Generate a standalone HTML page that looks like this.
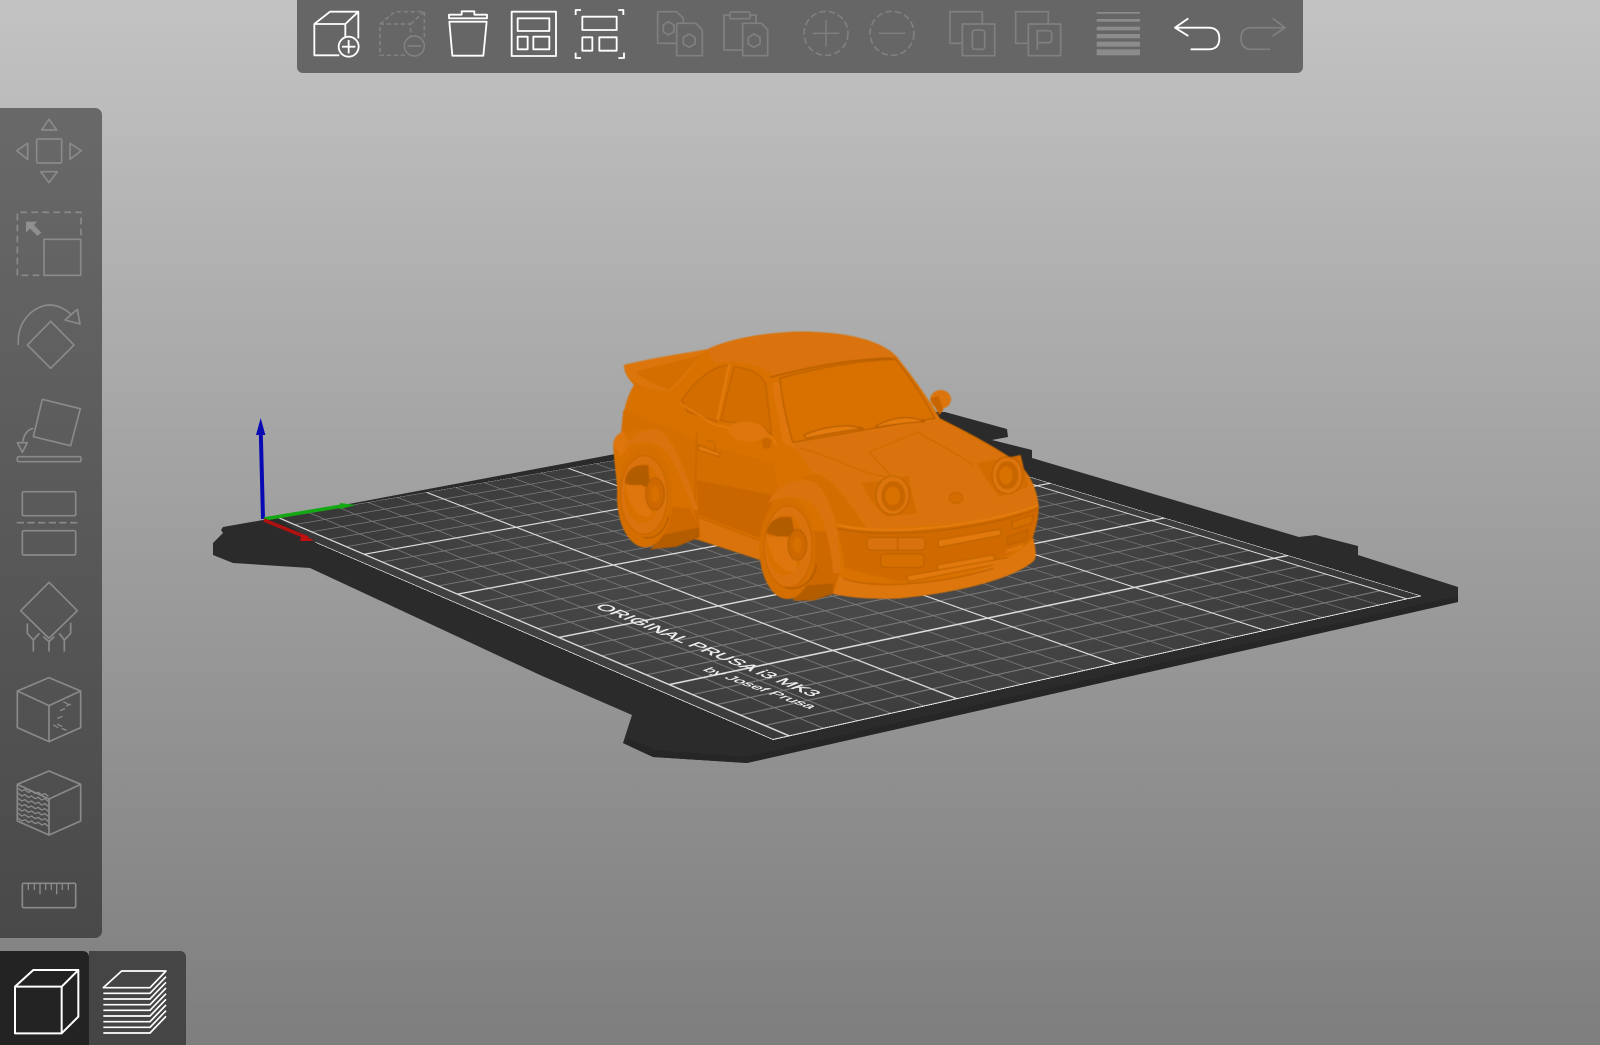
<!DOCTYPE html>
<html><head><meta charset="utf-8"><title>PrusaSlicer</title>
<style>
html,body{margin:0;padding:0;width:1600px;height:1045px;overflow:hidden;background:#999}
svg.l{display:block;position:absolute;left:0;top:0}
#g{position:absolute;left:0;top:0;width:1000px;height:1000px;transform-origin:0 0;
transform:matrix3d(.6678,-.0568,0,.00010025, .3626,.0789,0,-.00019067, 0,0,1,0, 263,520,0,1)}
#g svg{display:block;width:1000px;height:1000px}
text{font-family:"Liberation Sans",sans-serif;fill:#efefef}
</style></head><body>
<svg class="l" width="1600" height="1045" viewBox="0 0 1600 1045" xmlns="http://www.w3.org/2000/svg">
<defs>
<linearGradient id="bg" x1="0" y1="0" x2="0" y2="1"><stop offset="0" stop-color="#c3c3c3"/><stop offset=".4" stop-color="#a6a6a6"/><stop offset="1" stop-color="#7e7e7e"/></linearGradient>
</defs>
<rect width="1600" height="1045" fill="url(#bg)"/>
<polygon fill="#2b2b2b" points="263,520 223,527 221,530 223,533 213,543 213,555 233,563 310,568 540,675 632,715 623,743 653,757 747,763 1458,602 1458,587 1358,555 1358,546 1323,537 1316,535 1299,537 1032,458 1032,450 1004,443 992,440 1008,437 1007,429 945,412 850,410"/>
<polygon fill="#262626" points="623,743 653,757 747,763 1458,602 1458,596 745,757 655,750 628,738"/>
</svg>

<div id="g"><svg viewBox="0 0 1000 1000" xmlns="http://www.w3.org/2000/svg">
<defs><radialGradient id="bed" cx=".45" cy=".55" r=".7"><stop offset="0" stop-color="#4c4c4c"/><stop offset=".6" stop-color="#424242"/><stop offset="1" stop-color="#363636"/></radialGradient></defs>
<polygon points="23.4,0 1000,0 1000,1000 0,1000 0,123" fill="url(#bed)"/>
<path stroke="#7c7c7c" stroke-width="2.2" fill="none" d="M71,0V1000M118.6,0V1000M166.2,0V1000M213.8,0V1000M309,0V1000M356.6,0V1000M404.2,0V1000M451.8,0V1000M547,0V1000M594.6,0V1000M642.2,0V1000M689.8,0V1000M785,0V1000M832.6,0V1000M880.2,0V1000M927.8,0V1000"/>
<path stroke="#7c7c7c" stroke-width="2.8" fill="none" d="M23,40H975M23,80H975M23,120H975M23,160H975M23,240H975M23,280H975M23,320H975M23,360H975M23,440H975M23,480H975M23,520H975M23,560H975M23,640H975M23,680H975M23,720H975M23,760H975M23,840H975M23,880H975M23,920H975M23,960H975"/>
<path stroke="#dcdcdc" stroke-width="4.4" fill="none" d="M23,200H1000M23,400H1000M23,600H1000M23,800H1000"/>
<path stroke="#dedede" stroke-width="3.4" fill="none" d="M23.4,0V1000M261.4,0V1000M499.4,0V1000M737.4,0V1000M975.4,0V1000"/>
<path stroke="#f0f0f0" stroke-width="3.6" fill="none" d="M0,123V1000M1000,300V1000"/>
<path stroke="#f0f0f0" stroke-width="5" fill="none" d="M0,1000H1000"/>
<path stroke="#a8a8a8" stroke-width="3" fill="none" d="M23,0H1000"/>
</svg></div>

<svg class="l" width="1600" height="1045" viewBox="0 0 1600 1045" xmlns="http://www.w3.org/2000/svg">
<defs>
<linearGradient id="lp" x1="0" y1="0" x2="0" y2="1"><stop offset="0" stop-color="#696969"/><stop offset="1" stop-color="#494949"/></linearGradient>
<filter id="b2" x="-5%" y="-5%" width="110%" height="110%"><feGaussianBlur stdDeviation="1.8"/></filter>
</defs>
<text transform="matrix(.924 .381 -.95 .35 594 607)" font-size="16" textLength="236" lengthAdjust="spacingAndGlyphs" stroke="#efefef" stroke-width=".35">ORIGINAL PRUSA i3 MK3</text>
<text transform="matrix(.94 .34 -.95 .35 702 670)" font-size="12.5" textLength="115" lengthAdjust="spacingAndGlyphs" stroke="#efefef" stroke-width=".25">by Josef Prusa</text>

<line x1="263" y1="519" x2="260.8" y2="433" stroke="#0a0ab4" stroke-width="4"/>
<polygon points="260.7,418 256,435 265.4,435" fill="#0a0ab4"/>
<line x1="264" y1="519" x2="345" y2="505.5" stroke="#14a814" stroke-width="3.5"/>
<polygon points="340,503 356,505 340,509" fill="#14a814"/>
<line x1="264" y1="520" x2="308" y2="538" stroke="#b01010" stroke-width="3.5"/>
<polygon points="302,534 314,541 300,541" fill="#c01010"/>

<!-- car -->
<g transform="translate(600 320) scale(.33333)"><g filter="url(#b2)">
 <ellipse cx="1022" cy="238" rx="31" ry="28" fill="#dc7407"/>
 <path d="M990,235 L1015,228 L1030,270 L1018,285Z" fill="#c86504"/>
 <path d="M72,135 C150,115 250,100 322,88 C380,60 480,38 600,35 C720,35 840,55 892,112 C930,160 975,220 1020,295 C1080,325 1170,370 1250,425 C1290,460 1312,510 1316,560 C1316,600 1305,630 1298,655 C1308,690 1310,710 1302,722 C1250,770 1100,815 900,835 C830,838 760,835 700,822 L640,800 L480,720 L295,660 L200,640 L60,590 C55,500 40,420 40,375 C42,350 55,340 72,335 C62,290 80,230 102,195 C85,175 72,160 72,135 Z" fill="#d87106"/>
 <path d="M70,270 C150,300 230,330 300,370 L520,430 L540,530 L480,660 L295,590 L250,430 L150,360 L60,370Z" fill="#d46e06"/>
 <path d="M290,480 L520,525 L500,660 L470,650 L295,585Z" fill="#c96605"/>
 <path d="M280,585 L480,660 L480,720 L295,655Z" fill="#db7307"/>
 <path d="M283,587 L478,662" stroke="#c26204" stroke-width="3" fill="none"/>
 <path d="M40,375 C60,335 130,310 190,330 C240,370 270,490 295,620 L280,655 L200,660 L60,600Z" fill="#d66f06"/>
 <path d="M40,375 C42,350 55,340 72,335 L92,375 L62,410Z" fill="#de7507"/>
 <path d="M322,88 C380,60 480,38 600,35 C720,35 840,55 892,112 C780,115 640,140 520,170 C480,130 400,120 340,130Z" fill="#da7207"/>
 <path d="M510,172 C640,137 780,114 892,114" stroke="#b35b04" stroke-width="4" fill="none"/>
 <path d="M72,135 C150,115 250,100 322,88 C290,120 250,190 205,215 C170,210 130,205 122,198 C95,185 72,160 72,135Z" fill="#dd7507"/>
 <path d="M108,155 C170,138 260,118 305,105 C275,130 240,185 205,208 C165,195 130,180 108,155Z" fill="#d46e06"/>
 <path d="M245,240 C280,190 330,140 385,135 L350,305 L262,275Z" fill="#d36d05" stroke="#b85d04" stroke-width="3"/>
 <path d="M402,140 C445,145 482,160 497,192 L515,345 L490,320 L362,302Z" fill="#d36d05" stroke="#b85d04" stroke-width="3"/>
 <path d="M388,132 L352,300" stroke="#e47b0c" stroke-width="7"/>
 <path d="M240,250 L345,315 L515,350 L530,375" stroke="#e47b0c" stroke-width="5" fill="none"/>
 <path d="M515,190 L550,372 L600,390 L1020,300 L892,112Z" fill="#df7608"/>
 <path d="M540,175 C640,145 780,120 888,118 C930,170 975,240 1005,295 C900,310 740,340 578,367 C560,300 545,240 540,175Z" fill="#d87106" stroke="#b35b04" stroke-width="3.5"/>
 <path d="M612,345 C670,320 740,310 790,325 C720,335 660,345 618,355Z" fill="#e47b0c" stroke="#a85503" stroke-width="3"/>
 <path d="M828,318 C880,290 930,285 975,305 C920,308 870,315 832,322Z" fill="#e47b0c" stroke="#a85503" stroke-width="3"/>
 <path d="M578,372 C720,345 880,325 1020,298 C1100,345 1180,385 1250,425 C1290,460 1312,510 1316,560 C1200,600 1000,625 800,625 C700,600 650,470 578,372Z" fill="#da7307"/>
 <path d="M600,385 C680,400 800,470 860,470" stroke="#c86605" stroke-width="2.5" fill="none"/>
 <path d="M805,395 C830,420 850,440 870,465" stroke="#c56404" stroke-width="2.5" fill="none"/>
 <path d="M950,335 C1010,370 1070,400 1120,435" stroke="#c56404" stroke-width="2.5" fill="none"/>
 <path d="M810,395 L955,335" stroke="#cb6705" stroke-width="2.5" fill="none"/>
 <path d="M650,460 C720,490 780,600 800,625 L710,610 C700,570 650,500 600,470Z" fill="#d46d06"/>
 <path d="M295,375 L360,400 L358,410 L295,390Z" fill="#e37a0a" stroke="#b35b04" stroke-width="2.5"/>
 <path d="M320,365 C340,355 350,375 345,395" fill="none" stroke="#b85d04" stroke-width="2.5"/>
 <path d="M290,340 L285,570" stroke="#c26204" stroke-width="3"/>
 <path d="M480,345 L515,360 L510,385 L490,385Z" fill="#c86605"/>
 <ellipse cx="443" cy="335" rx="58" ry="30" fill="#df7608" transform="rotate(6 443 335)"/>
 <path d="M712,615 C850,650 1150,620 1316,555 C1316,600 1305,630 1298,655 C1240,710 1100,760 900,785 L735,745Z" fill="#d06b05"/>
 <path d="M712,615 C850,650 1150,620 1316,555" stroke="#e67d0c" stroke-width="6" fill="none"/>
 <path d="M712,625 C850,660 1150,630 1310,568" stroke="#b35b04" stroke-width="3" fill="none"/>
 <rect x="800" y="652" width="175" height="38" rx="10" fill="#d97107" stroke="#b35b04" stroke-width="2.5"/>
 <line x1="893" y1="652" x2="893" y2="690" stroke="#b35b04" stroke-width="2.5"/>
 <rect x="842" y="702" width="130" height="40" rx="10" fill="#d56f06" stroke="#b35b04" stroke-width="2.5"/>
 <path d="M1015,660 L1200,628 L1205,645 L1015,682Z" fill="#e27908" stroke="#b35b04" stroke-width="2.5"/>
 <path d="M1010,735 L1180,705 L1185,720 L1015,750Z" fill="#e27908" stroke="#b35b04" stroke-width="2.5"/>
 <path d="M920,768 L1240,710 L1240,722 L925,785Z" fill="#e27908" stroke="#b35b04" stroke-width="2.5"/>
 <path d="M1235,605 L1300,585 L1295,610 L1238,628Z" fill="#d56f06" stroke="#b35b04" stroke-width="2.5"/>
 <path d="M1222,650 L1285,630 L1280,660 L1222,675Z" fill="#cb6705" stroke="#b35b04" stroke-width="2"/>
 <path d="M1218,690 L1270,672 L1265,685 L1218,700Z" fill="#df7608"/>
 <path d="M695,735 C715,790 800,800 900,795 C1060,785 1220,740 1300,655 C1308,690 1310,710 1302,722 C1250,770 1100,815 900,835 C830,838 760,835 700,822 C690,790 685,760 695,735Z" fill="#dd7608"/>
 <path d="M730,775 C800,805 1000,800 1180,745" stroke="#bb5f04" stroke-width="3.5" fill="none"/>
 <path d="M785,490 L925,468 L950,580 L860,590 C820,560 800,520 785,490Z" fill="#d26c05"/>
 <ellipse cx="878" cy="526" rx="50" ry="58" fill="#dc7407" stroke="#b05903" stroke-width="2.5"/>
 <ellipse cx="880" cy="528" rx="36" ry="44" fill="#c76504"/>
 <ellipse cx="878" cy="528" rx="22" ry="28" fill="#d87106"/>
 <path d="M1130,430 L1262,405 L1285,500 L1200,530 C1170,500 1150,460 1130,430Z" fill="#d26c05"/>
 <ellipse cx="1222" cy="466" rx="46" ry="56" fill="#dc7407" stroke="#b05903" stroke-width="2.5"/>
 <ellipse cx="1222" cy="466" rx="33" ry="42" fill="#c76504"/>
 <ellipse cx="1218" cy="466" rx="20" ry="27" fill="#d87106"/>
 <ellipse cx="1068" cy="534" rx="20" ry="16" fill="#d46d06" stroke="#b35b04" stroke-width="2"/>
 <path d="M215,555 L295,565 L300,650 L230,680 L150,688 C190,660 215,610 215,555Z" fill="#cd6805"/>
 <path d="M190,645 L297,622 L298,652 L230,680 L150,688Z" fill="#b35b04"/>
 <path d="M60,440 C80,370 130,360 190,380 C215,420 250,500 300,620 L270,565 L215,560 C205,470 170,400 130,385Z" fill="#d87006"/>
 <ellipse cx="135" cy="530" rx="84" ry="152" fill="#d56e06"/>
 <ellipse cx="132" cy="525" rx="70" ry="118" fill="#da7307" stroke="#bb5f04" stroke-width="2"/>
 <ellipse cx="128" cy="520" rx="55" ry="88" fill="#d87006"/>
 <path d="M75,490 C76,450 105,430 145,436 L150,500 L110,500Z" fill="#b25b03"/>
 <path d="M76,495 L125,495 L150,510 L155,590 C115,600 85,560 76,495Z" fill="#de7608"/>
 <ellipse cx="165" cy="522" rx="28" ry="48" fill="#cd6905" stroke="#ae5903" stroke-width="2.5"/>
 <ellipse cx="165" cy="522" rx="13" ry="24" fill="#d87006"/>
 <path d="M130,652 C165,660 195,635 205,590" stroke="#a25202" stroke-width="3" fill="none"/>
 <path d="M70,390 C90,340 140,320 180,330 C230,370 270,490 295,570 L280,570 C250,500 225,420 185,382 C140,360 100,365 70,390Z" fill="#da7207"/>
 <path d="M620,630 L705,640 L722,750 L700,820 L640,840 L580,842 C620,790 630,700 620,630Z" fill="#cd6805"/>
 <path d="M575,800 L700,790 L698,822 L640,842 L580,842Z" fill="#b35b04"/>
 <ellipse cx="562" cy="685" rx="84" ry="152" fill="#d56e06"/>
 <ellipse cx="565" cy="680" rx="72" ry="122" fill="#da7307" stroke="#bb5f04" stroke-width="2"/>
 <ellipse cx="555" cy="675" rx="56" ry="90" fill="#d87006"/>
 <path d="M500,640 C504,605 530,585 575,592 L585,650 L535,650Z" fill="#b25b03"/>
 <path d="M500,650 L560,650 L590,670 L590,755 C540,760 510,715 500,650Z" fill="#de7608"/>
 <ellipse cx="592" cy="675" rx="28" ry="46" fill="#cd6905" stroke="#ae5903" stroke-width="2.5"/>
 <ellipse cx="592" cy="675" rx="13" ry="24" fill="#d87006"/>
 <path d="M555,802 C600,815 640,785 650,735" stroke="#a25202" stroke-width="3" fill="none"/>
 <path d="M505,550 C530,480 610,470 650,490 C700,540 720,640 722,760 L700,760 C690,660 670,590 640,555 C600,525 545,525 505,550Z" fill="#da7207"/>
</g></g>

<!-- top toolbar -->
<path d="M297,0 H1303 V67 a6,6 0 0 1 -6,6 H303 a6,6 0 0 1 -6,-6Z" fill="#666"/>
<g transform="translate(290 0) scale(.33333)" fill="none" stroke-linejoin="round">
 <g stroke="#fff" stroke-width="5.5">
  <path d="M148,166 H73 V72 H166 V112 M73,72 L120,35 H205 V115 M166,72 L205,35"/>
  <circle cx="176" cy="140" r="30"/><path d="M176,120 V160 M156,140 H196"/>
  <path d="M478,65 H590 L580,167 H487Z"/><path d="M477,44 H515 V34 H553 V44 H591 V55 H477Z"/>
  <rect x="665" y="35" width="133" height="133"/><rect x="683" y="55" width="95" height="38"/><rect x="683" y="110" width="30" height="38"/><rect x="730" y="110" width="48" height="38"/>
  <path d="M857,45 V30 H873 M985,30 H1000 V45 M857,158 V174 H873 M985,174 H1002 V158"/>
  <rect x="877" y="50" width="103" height="40"/><rect x="877" y="112" width="30" height="40"/><rect x="928" y="112" width="52" height="40"/>
 </g>
 <g stroke="#808080" stroke-width="5">
  <path d="M345,166 H270 V72 H362 V112 M270,72 L315,35 H403 V115 M362,72 L403,35" stroke-dasharray="13 8"/>
  <circle cx="373" cy="138" r="30"/><path d="M353,138 H393"/>
  <path d="M1158,130 H1103 V35 H1160 L1180,55 V70"/><polygon points="1135,65 1152,75 1152,95 1135,105 1120,95 1120,75"/>
  <path d="M1160,70 H1218 L1237,90 V167 H1160Z"/><polygon points="1197,102 1215,112 1215,132 1197,142 1180,132 1180,112"/>
  <path d="M1320,45 H1302 V150 H1357 M1380,45 H1398 V70"/><rect x="1320" y="36" width="60" height="20" rx="4"/>
  <path d="M1358,70 H1415 L1433,90 V167 H1358Z"/><polygon points="1392,102 1410,112 1410,132 1392,142 1375,132 1375,112"/>
 </g>
</g>
<g transform="translate(800 0) scale(.33333)" fill="none" stroke-linejoin="round">
 <g stroke="#808080" stroke-width="5">
  <circle cx="78" cy="100" r="66" stroke-dasharray="20 9"/><path d="M78,60 V140 M38,100 H118" stroke-width="4"/>
  <circle cx="276" cy="100" r="66" stroke-dasharray="20 9"/><path d="M236,100 H316" stroke-width="4"/>
  <path d="M485,130 H450 V35 H547 V70"/><rect x="487" y="72" width="97" height="95"/><rect x="517" y="90" width="37" height="58" rx="8"/>
  <path d="M682,130 H647 V35 H745 V70"/><rect x="685" y="72" width="97" height="95"/><path d="M712,150 V92 H745 Q755,92 755,102 V118 Q755,128 745,128 H712"/>
 </g>
 <g fill="#8c8c8c"><rect x="890" y="36" width="130" height="5"/><rect x="890" y="57" width="130" height="8"/><rect x="890" y="80" width="130" height="11"/><rect x="890" y="102" width="130" height="13"/><rect x="890" y="125" width="130" height="15"/><rect x="890" y="148" width="130" height="18"/></g>
 <path d="M1165,55 L1125,83 L1165,108 M1125,83 H1225 Q1258,83 1258,115 Q1258,148 1225,148 H1172" stroke="#fff" stroke-width="5.5"/>
 <path d="M1418,55 L1455,83 L1418,108 M1455,83 H1355 Q1323,83 1323,115 Q1323,148 1355,148 H1410" stroke="#808080" stroke-width="5"/>
</g>

<!-- left toolbar -->
<path d="M0,108 H95 a7,7 0 0 1 7,7 V931 a7,7 0 0 1 -7,7 H0Z" fill="url(#lp)"/>
<g transform="translate(0 100) scale(.33333)" fill="none" stroke="#8a8a8a" stroke-width="5" stroke-linejoin="round">
 <polygon points="147,58 125,90 170,90"/><polygon points="50,152 83,130 83,178"/><polygon points="244,152 210,130 210,178"/><polygon points="147,248 122,215 172,215"/>
 <rect x="110" y="117" width="75" height="72" rx="4"/>
 <path d="M118,526 H52 V337 H243 V412" stroke-dasharray="20 13"/>
 <rect x="132" y="418" width="110" height="108"/>
 <polygon points="78,365 112,365 102,375 124,398 112,408 90,386 78,398" fill="#8f8f8f" stroke="none"/>
 <polygon points="152,664 222,735 152,805 82,735"/>
 <path d="M55,735 C50,660 105,615 150,615 C175,615 200,630 215,645"/><polygon points="232,628 240,672 195,660"/>
 <polygon points="127,898 241,926 212,1037 100,1010"/>
 <path d="M100,985 Q75,990 68,1025"/><polygon points="52,1028 82,1028 67,1057"/>
 <rect x="52" y="1070" width="191" height="15" rx="4"/>
</g>
<g transform="translate(0 470) scale(.33333)" fill="none" stroke="#8a8a8a" stroke-width="5" stroke-linejoin="round">
 <rect x="67" y="65" width="160" height="72" rx="4"/><path d="M50,158 H240" stroke-dasharray="22 10"/><rect x="67" y="182" width="160" height="73" rx="4"/>
 <polygon points="147,337 232,422 147,505 62,422"/>
 <path d="M82,460 V490 L100,510 V545 M118,490 L100,510 M147,545 V515 L130,500 M147,515 L163,500 M212,458 V490 L193,510 V545 M178,490 L193,510"/>
 <polygon points="147,623 242,663 147,707 52,663"/><path d="M52,663 V773 L147,815 V707 M147,815 L242,773 V663"/>
 <path d="M190,695 L205,703 M198,708 L213,702 M180,722 L195,716 M172,745 L187,739 M160,765 L175,773 M172,762 L187,770 M185,775 L200,781" stroke-width="4"/>
 <polygon points="147,903 242,943 147,987 52,943"/><path d="M52,943 V1053 L147,1095 V987 M147,1095 L242,1053 V943"/>
 <path stroke-width="4" d="M55,955 l10,8 l10,-4 l10,8 l10,-4 l10,8 l10,-4 l10,8 l10,-4 l10,8 M55,970 l10,8 l10,-4 l10,8 l10,-4 l10,8 l10,-4 l10,8 l10,-4 l10,8 M55,985 l10,8 l10,-4 l10,8 l10,-4 l10,8 l10,-4 l10,8 l10,-4 l10,8 M55,1000 l10,8 l10,-4 l10,8 l10,-4 l10,8 l10,-4 l10,8 l10,-4 l10,8 M55,1015 l10,8 l10,-4 l10,8 l10,-4 l10,8 l10,-4 l10,8 l10,-4 l10,8 M55,1030 l10,8 l10,-4 l10,8 l10,-4 l10,8 l10,-4 l10,8 l10,-4 l10,8 M55,1045 l10,8 l10,-4 l10,8 l10,-4 l10,8 l10,-4 l10,8 l10,-4 l10,8"/>
</g>
<g transform="translate(0 840) scale(.33333)" fill="none" stroke="#8a8a8a" stroke-width="5">
 <rect x="67" y="130" width="160" height="73" rx="4"/>
 <path d="M85,130 V150 M103,130 V150 M120,130 V163 M137,130 V150 M154,130 V150 M170,130 V163 M187,130 V150 M205,130 V150" stroke-width="4"/>
</g>

<!-- bottom tabs -->
<path d="M89,951 H180 a6,6 0 0 1 6,6 V1045 H89Z" fill="#454545"/>
<path d="M0,951 H83 a6,6 0 0 1 6,6 V1045 H0Z" fill="#232323"/>
<g transform="translate(0 840) scale(.33333)" fill="none" stroke="#fff" stroke-linejoin="round">
 <g stroke-width="6"><rect x="45" y="440" width="140" height="140"/><path d="M45,440 L100,390 H235 L185,440 M235,390 V530 L185,580"/></g>
 <g stroke-width="5">
  <polygon points="310,443 365,393 498,393 450,443"/>
  <path d="M310,460 H450 L498,410 M310,477 H450 L498,427 M310,494 H450 L498,444 M310,511 H450 L498,461 M310,528 H450 L498,478 M310,545 H450 L498,495 M310,562 H450 L498,512 M310,579 H450 L498,529"/>
 </g>
</g>
</svg>
</body></html>
